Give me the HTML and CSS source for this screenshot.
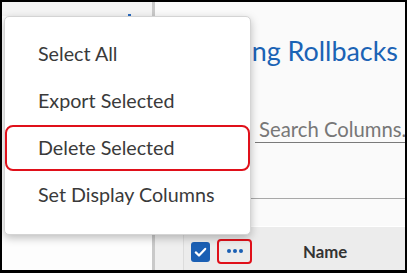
FILE: index.html
```html
<!DOCTYPE html>
<html lang="en">
<head>
<meta charset="utf-8">
<title>Rollbacks</title>
<link rel="stylesheet" href="styles.css">
</head>
<body>
<div class="frame">
  <aside class="left">
    <div class="left-head"><span class="mark"></span></div>
  </aside>
  <div class="divider"></div>
  <main class="main">
    <h1 class="title">Pending Rollbacks</h1>
    <div class="search"><span class="placeholder">Search Columns...</span></div>
    <div class="toolbar"></div>
    <div class="gap-row"></div>
    <div class="thead">
      <div class="th-first"></div>
      <span class="checkbox">
        <svg width="19" height="20" viewBox="0 0 19 20"><rect x="0" y="0" width="19" height="20" rx="3" fill="#1a5fb4"/><path d="M4.8 10.4l3.2 3.1 6.2-6.6" fill="none" stroke="#fff" stroke-width="2.2" stroke-linecap="round" stroke-linejoin="round"/></svg>
      </span>
      <span class="more"><i></i><i></i><i></i></span>
      <span class="th-name">Name</span>
    </div>
  </main>
  <ul class="menu">
    <li class="item">Select All</li>
    <li class="item">Export Selected</li>
    <li class="item hl">Delete Selected</li>
    <li class="item">Set Display Columns</li>
  </ul>
</div>
</body>
</html>
```

FILE: styles.css
```css
html, body {
  margin: 0;
  padding: 0;
}
body {
  width: 407px;
  height: 273px;
  overflow: hidden;
  font-family: Lato, "Open Sans", sans-serif;
  background: #fff;
}
.frame {
  position: relative;
  box-sizing: border-box;
  width: 407px;
  height: 273px;
  border-style: solid;
  border-color: #000;
  border-width: 2px 2px 3px 2px;
  display: flex;
  overflow: hidden;
  background: #fafafa;
}
.left {
  width: 150px;
  flex: none;
  background: #fdfdfd;
}
.left-head {
  box-sizing: border-box;
  height: 14px;
  padding: 12px 0 0 126px;
  background: #f4f4f4;
}
.mark {
  display: block;
  width: 3px;
  height: 2px;
  background: #2a6bc0;
}
.divider {
  width: 3px;
  flex: none;
  background: #c9c9c9;
}
.main {
  flex: 1;
  min-width: 0;
  display: flex;
  flex-direction: column;
  background: #fafafa;
}
.title {
  margin: 34px 7px 0 0;
  height: 30px;
  line-height: 30px;
  font-size: 26.9px;
  font-weight: 400;
  color: #1b63b5;
  text-align: right;
  white-space: nowrap;
}
.search {
  flex: none;
  margin: 50px 0 0 100px;
  height: 26px;
  padding-left: 4px;
  border-bottom: 1px solid #7a7a7a;
  overflow: hidden;
  white-space: nowrap;
}
.placeholder {
  font-size: 20.3px;
  line-height: 26px;
  color: #777;
}
.toolbar {
  flex: none;
  height: 55px;
  border-bottom: 1px solid #a8a8a8;
}
.gap-row {
  flex: none;
  height: 27px;
}
.thead {
  flex: none;
  height: 48px;
  border-top: 1px solid #fff;
  background: #ececec;
  display: flex;
  align-items: center;
}
.th-first {
  align-self: stretch;
  width: 28px;
  background: #efefef;
  border-right: 1px solid #dcdcdc;
}
.checkbox {
  display: block;
  width: 19px;
  height: 20px;
  margin-left: 7px;
  margin-top: 1px;
}
.checkbox svg {
  display: block;
}
.more {
  box-sizing: border-box;
  width: 35px;
  height: 25px;
  margin-left: 7px;
  border: 2px solid #e0101a;
  border-radius: 4px;
  display: flex;
  align-items: center;
  justify-content: center;
  gap: 2px;
}
.more i {
  display: block;
  width: 4px;
  height: 4px;
  border-radius: 50%;
  background: #1a5fb4;
}
.th-name {
  margin-left: 51px;
  font-size: 16.8px;
  font-weight: 700;
  color: #333;
}
.menu {
  position: absolute;
  left: 2px;
  top: 14px;
  box-sizing: border-box;
  width: 247px;
  height: 219px;
  margin: 0;
  padding: 13px 0 0 0;
  list-style: none;
  background: #fff;
  border: 1px solid #d4d4d4;
  border-radius: 5px;
  box-shadow: 0 3px 8px rgba(0, 0, 0, 0.25);
}
.item {
  box-sizing: border-box;
  height: 46px;
  margin: 1px 0;
  padding-left: 31px;
  border: 2px solid transparent;
  border-radius: 8px;
  font-size: 19.7px;
  line-height: 42px;
  color: #3a3a3a;
  white-space: nowrap;
}
.item.hl {
  border-color: #e0101a;
}
```
